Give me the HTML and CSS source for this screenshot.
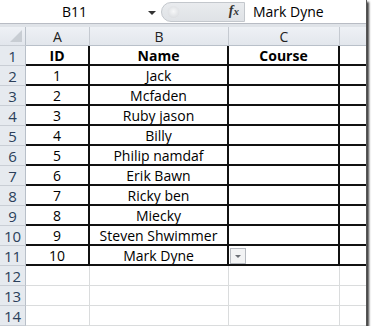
FILE: index.html
```html
<!DOCTYPE html>
<html lang="en">
<head>
    <meta charset="UTF-8">
    <title>Sheet</title>
    <link rel="stylesheet" href="styles.css">
</head>
<body>
    <div class="window">
        <div class="formula-bar">
            <div class="name-box">
                <span class="cell-ref">B11</span>
                <span class="arrow"></span>
            </div>
            <div class="fx-pill">
                <span class="knob"></span>
                <span class="fx">f<i>x</i></span>
            </div>
            <div class="formula-input">Mark Dyne</div>
        </div>
        <div class="gap"></div>
        <div class="sheet">
            <div class="row col-heads">
                <div class="rh corner"><span class="tri"></span></div>
                <div class="ch">A</div><div class="ch">B</div><div class="ch">C</div><div class="ch last"></div>
            </div>
            <div class="row data"><div class="rh">1</div><div class="cell b">ID</div><div class="cell b">Name</div><div class="cell b">Course</div><div class="cell"></div></div>
            <div class="row data"><div class="rh">2</div><div class="cell">1</div><div class="cell">Jack</div><div class="cell"></div><div class="cell"></div></div>
            <div class="row data"><div class="rh">3</div><div class="cell">2</div><div class="cell">Mcfaden</div><div class="cell"></div><div class="cell"></div></div>
            <div class="row data"><div class="rh">4</div><div class="cell">3</div><div class="cell">Ruby jason</div><div class="cell"></div><div class="cell"></div></div>
            <div class="row data"><div class="rh">5</div><div class="cell">4</div><div class="cell">Billy</div><div class="cell"></div><div class="cell"></div></div>
            <div class="row data"><div class="rh">6</div><div class="cell">5</div><div class="cell">Philip namdaf</div><div class="cell"></div><div class="cell"></div></div>
            <div class="row data"><div class="rh">7</div><div class="cell">6</div><div class="cell">Erik Bawn</div><div class="cell"></div><div class="cell"></div></div>
            <div class="row data"><div class="rh">8</div><div class="cell">7</div><div class="cell">Ricky ben</div><div class="cell"></div><div class="cell"></div></div>
            <div class="row data"><div class="rh">9</div><div class="cell">8</div><div class="cell">Miecky</div><div class="cell"></div><div class="cell"></div></div>
            <div class="row data"><div class="rh">10</div><div class="cell">9</div><div class="cell">Steven Shwimmer</div><div class="cell"></div><div class="cell"></div></div>
            <div class="row data"><div class="rh">11</div><div class="cell">10</div><div class="cell">Mark Dyne</div><div class="cell has-opt"><span class="paste-opt"></span></div><div class="cell"></div></div>
            <div class="row empty"><div class="rh">12</div><div class="cell"></div><div class="cell"></div><div class="cell"></div><div class="cell"></div></div>
            <div class="row empty"><div class="rh">13</div><div class="cell"></div><div class="cell"></div><div class="cell"></div><div class="cell"></div></div>
            <div class="row empty"><div class="rh">14</div><div class="cell"></div><div class="cell"></div><div class="cell"></div><div class="cell"></div></div>
        </div>
    </div>
</body>
</html>
```
FILE: styles.css
```css
* { margin: 0; padding: 0; box-sizing: border-box; }
body {
    background: #ffffff;
    font-family: 'Open Sans', 'Noto Sans', sans-serif;
    color: #000;
}
.window {
    width: 367px;
    height: 326px;
    background: #fff;
    box-shadow: 2px 2px 2px rgba(0,0,0,0.75);
    overflow: hidden;
    border-right: 1px solid #555;
}
.formula-bar {
    display: flex;
    height: 24px;
    background: #fff;
    border-bottom: 1px solid #b8bcc4;
}
.name-box {
    width: 161px;
    display: flex;
    align-items: center;
    position: relative;
}
.cell-ref {
    font-size: 14px;
    margin-left: 62px;
}
.arrow {
    position: absolute;
    left: 148px;
    top: 11px;
    border: 4px solid transparent;
    border-top: 4px solid #333;
    border-bottom: 0;
}
.fx-pill {
    width: 84px;
    margin: 2px 0 1px 0;
    background: linear-gradient(#e9ebee, #dfe2e6);
    border: 1px solid #c3c7cc;
    border-radius: 11px 0 0 11px;
    position: relative;
}
.knob {
    position: absolute;
    left: 5px;
    top: 3px;
    width: 13px;
    height: 13px;
    border-radius: 50%;
    background: radial-gradient(circle at 50% 40%, #f6f7f8, #d3d6da);
    border: 1px solid #e3e5e8;
}
.fx {
    position: absolute;
    right: 5px;
    top: 0;
    font-family: 'Liberation Serif', serif;
    font-style: italic;
    font-weight: bold;
    font-size: 14px;
    color: #333;
}
.fx i { font-size: 11px; }
.formula-input {
    flex: 1;
    font-size: 14px;
    padding-left: 8px;
    line-height: 23px;
}
.gap {
    height: 3px;
    background: #dfe3e8;
}
.sheet { font-size: 14px; }
.row {
    display: grid;
    grid-template-columns: 26px 64px 139px 111px 1fr;
    height: 20px;
}
.row > div {
    display: flex;
    align-items: center;
    justify-content: center;
    white-space: nowrap;
    overflow: hidden;
}
.col-heads {
    height: 19px;
    background: linear-gradient(#eef1f5, #e2e6ec);
}
.ch {
    border-right: 1px solid #c5cad1;
    border-bottom: 1px solid #b9c0c9;
    color: #222;
}
.ch.last { border-right: none; }
.rh {
    background: #e6eaef;
    border-right: 1px solid #b9c0c9;
    border-bottom: 1px solid #c9ced5;
    color: #2b3f5a;
    font-size: 15px;
}
.corner {
    position: relative;
    background: linear-gradient(#eef1f5, #e2e6ec);
}
.tri {
    position: absolute;
    right: 3px;
    bottom: 3px;
    border-left: 12px solid transparent;
    border-bottom: 12px solid #c8cdd3;
}
.data .cell {
    border-bottom: 2px solid #111;
    border-right: 2px solid #111;
}
.data .cell:last-child { border-right: none; }
.data .cell.b { font-weight: bold; }
.empty .cell {
    border-bottom: 1px solid #dadcdd;
    border-right: 1px solid #dadcdd;
}
.empty .cell:last-child { border-right: none; }
.row > .has-opt { position: relative; overflow: visible; }
.paste-opt {
    position: absolute;
    left: 1px;
    top: 2px;
    width: 16px;
    height: 16px;
    background: #f2f3f4;
    border: 1px solid #b5b9bf;
}
.paste-opt::after {
    content: '';
    position: absolute;
    left: 4px;
    top: 6px;
    border: 3px solid transparent;
    border-top: 3px solid #6b6f75;
    border-bottom: 0;
}
```
